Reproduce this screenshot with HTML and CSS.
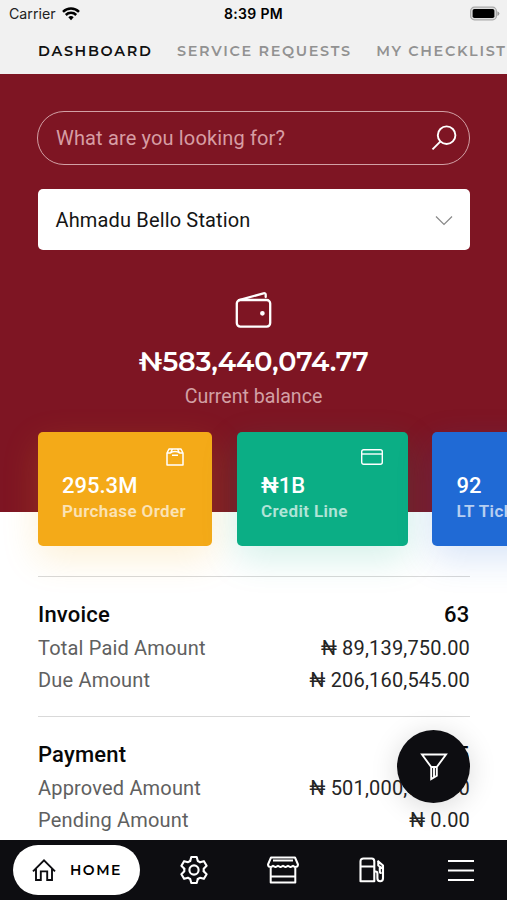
FILE: index.html
```html
<!DOCTYPE html>
<html lang="en">
<head>
<meta charset="utf-8">
<title>Dashboard</title>
<link rel="stylesheet" href="styles.css">
</head>
<body>
<div class="app">
  <header class="top">
    <div class="status">
      <div class="carrier"><span>Carrier</span>
        <svg width="18" height="14" viewBox="0 0 18 14"><path d="M9 13.2 6.3 10.3a3.9 3.9 0 0 1 5.4 0Z" fill="#000"/><path d="M3.8 8a7.4 7.4 0 0 1 10.4 0M1 4.8a11.5 11.5 0 0 1 16 0" fill="none" stroke="#000" stroke-width="2.5"/></svg>
      </div>
      <div class="time">8:39 PM</div>
      <svg class="battery" width="32" height="16" viewBox="0 0 32 16"><rect x="2.6" y="1.2" width="25.8" height="12.6" rx="3.8" fill="#ddd" stroke="#aaa" stroke-width="1.2"/><rect x="4.6" y="3" width="21.8" height="9" rx="1.8" fill="#000"/><path d="M29.4 5.2q2 .8 2 2.4t-2 2.4Z" fill="#999"/></svg>
    </div>
    <nav class="tabs">
      <span class="tab tab-on">DASHBOARD</span>
      <span class="tab">SERVICE REQUESTS</span>
      <span class="tab">MY CHECKLIST</span>
    </nav>
  </header>

  <main class="content">
    <section class="hero">
      <div class="search"><span>What are you looking for?</span>
        <svg width="26" height="26" viewBox="0 0 26 26" fill="none" stroke="#fff" stroke-width="1.9"><circle cx="15.6" cy="10.2" r="8.8"/><path d="M9.5 16.4 1.5 24.4"/></svg>
      </div>
      <div class="select"><span>Ahmadu Bello Station</span>
        <svg width="18" height="12" viewBox="0 0 18 12" fill="none" stroke="#888" stroke-width="1.2"><path d="M1 2.5 9 10.5 17 2.5"/></svg>
      </div>
      <svg class="wallet" width="38" height="38" viewBox="0 0 38 38" fill="none" stroke="#fff" stroke-width="2.3" stroke-linejoin="round" stroke-linecap="round"><rect x="1.8" y="9" width="33.4" height="26.6" rx="3.5"/><path d="M4 9.2 28.5 2.3q2-.5 2.2 1.4V6"/><circle cx="27.4" cy="22.3" r="1.2" fill="#fff"/></svg>
      <div class="balance">₦583,440,074.77</div>
      <div class="caption">Current balance</div>
    </section>

    <section class="cards">
      <article class="card orange">
        <svg width="18" height="18" viewBox="0 0 18 18" fill="none" stroke="#fff" stroke-width="1.5" stroke-linejoin="round"><path d="M1 5 3 1h12l2 4v12H1ZM1 5h3.5L6.5 1M17 5h-3.5l-2-4M4.5 5Q6 3.4 9 3.4T13.5 5M6 7.3h6"/></svg>
        <strong>295.3M</strong><span>Purchase Order</span>
      </article>
      <article class="card green">
        <svg class="credit" width="22" height="16" viewBox="0 0 22 16" fill="none" stroke="#fff" stroke-width="1.4"><rect x=".7" y=".7" width="20.6" height="14.6" rx="2"/><path d="M1 5h20"/></svg>
        <strong>₦1B</strong><span>Credit Line</span>
      </article>
      <article class="card blue"><strong>92</strong><span>LT Tickets</span></article>
    </section>

    <section class="group">
      <div class="row title"><span>Invoice</span><span>63</span></div>
      <div class="row"><span>Total Paid Amount</span><b>₦ 89,139,750.00</b></div>
      <div class="row"><span>Due Amount</span><b>₦ 206,160,545.00</b></div>
    </section>
    <section class="group">
      <div class="row title"><span>Payment</span><span>15</span></div>
      <div class="row"><span>Approved Amount</span><b>₦ 501,000,000.00</b></div>
      <div class="row"><span>Pending Amount</span><b>₦ 0.00</b></div>
    </section>
  </main>

  <div class="fab">
    <svg width="28" height="30" viewBox="0 0 28 30" fill="none" stroke="#fff" stroke-width="1.9"><path d="M2 2.5h24L16.8 15v8.7L11.2 27V15ZM11 15h6M14 16v9"/></svg>
  </div>

  <footer class="bar">
    <div class="home">
      <svg width="24" height="24" viewBox="0 0 24 24" fill="none" stroke="#0d0d11" stroke-width="1.9"><path d="M1 13.4 12 2.4l11 11M4 11v11h4.8v-8.6h6.4V22H20V11"/></svg>
      <span>HOME</span>
    </div>
    <div class="item"><svg width="30" height="30" viewBox="-15 -15 30 30" fill="none" stroke="#fff" stroke-width="2.1" stroke-linejoin="round" stroke-linecap="round"><g id="tooth"><path d="M-3.8-9-2.7-13H2.7L3.8-9 5.9-7.8"/></g><use href="#tooth" transform="rotate(60)"/><use href="#tooth" transform="rotate(120)"/><use href="#tooth" transform="rotate(180)"/><use href="#tooth" transform="rotate(240)"/><use href="#tooth" transform="rotate(300)"/><circle r="4.6"/></svg></div>
    <div class="item"><svg width="32" height="28" viewBox="0 0 32 28" fill="none" stroke="#fff" stroke-width="2" stroke-linejoin="round"><path d="M4 1.5h24l3 7q0 2.6-3 2.6l-2-1.3-2.5 1.3L21 9.8l-2.5 1.3L16 9.8l-2.5 1.3L11 9.8l-2.5 1.3L6 9.8 4 11.1q-3 0-3-2.6ZM3.7 11v15.5h24.6V11M4 20.5h24M6 4.5h20"/></svg></div>
    <div class="item"><svg width="26" height="28" viewBox="0 0 26 28" fill="none" stroke="#fff" stroke-width="2.1" stroke-linejoin="round"><path d="M1.5 25.3V5.5q0-3 3-3h8.3q2.5 0 2.5 3v19.8ZM1.5 10.5h13.8M15.3 15.5h1.3q1.8 0 1.8 2v4.7q0 3 2.8 3t2.8-3V9.5l-5.5-4.8M19.3 5.3v4.2l4 2.8M20.8 11v4.5q0 1.5 1.8 1.5"/></svg></div>
    <div class="item"><svg width="28" height="24" viewBox="0 0 28 24" stroke="#fff" stroke-width="2.2"><path d="M1 3h26M1 12.5h26M1 22h26"/></svg></div>
  </footer>
</div>
</body>
</html>
```
FILE: styles.css
```css
* { box-sizing: border-box; }
body { margin: 0; font-family: Roboto, "Liberation Sans", sans-serif; }
svg { display: block; flex: none; }

.app {
  position: relative;
  display: flex;
  flex-direction: column;
  width: 507px;
  height: 900px;
  overflow: hidden;
  background: #fff;
}

.top { flex: none; height: 74px; background: #f1f1f1; }
.status {
  display: grid;
  grid-template-columns: 1fr auto 1fr;
  align-items: center;
  height: 27px;
  padding: 0 7px 0 9px;
  font: 14.2px Inter, sans-serif;
  color: #222;
}
.carrier { display: flex; align-items: center; gap: 6px; }
.time { margin-left: -2px; font-size: 14px; font-weight: 600; letter-spacing: .3px; color: #000; }
.battery { justify-self: end; }
.tabs {
  display: flex;
  gap: 24.5px;
  height: 47px;
  padding-left: 38px;
  line-height: 48px;
  white-space: nowrap;
}
.tab {
  font-family: Montserrat, Inter, sans-serif;
  font-size: 14.4px;
  font-weight: 600;
  letter-spacing: 1.68px;
  color: #929292;
}
.tab-on { color: #111; }

.content { flex: 1; min-height: 0; overflow: hidden; }
.hero {
  display: flex;
  flex-direction: column;
  align-items: center;
  height: 438px;
  padding: 37px 37px 0;
  background: #7e1523;
}
.search, .select {
  display: flex;
  align-items: center;
  justify-content: space-between;
  width: 433px;
  font-size: 20px;
  letter-spacing: .15px;
}
.search {
  height: 54px;
  padding: 0 12px 0 18px;
  border: 1.5px solid #d2a0a5;
  border-radius: 27px;
  color: #d79da3;
}
.select {
  width: 432px;
  height: 61px;
  margin-top: 24px;
  padding: 0 17px 0 18px;
  border-radius: 5px;
  background: #fff;
  color: #151515;
}
.wallet { margin-top: 41px; }
.balance {
  margin-top: 16px;
  font: 600 27px/34px Montserrat, Inter, sans-serif;
  letter-spacing: -.05px;
  color: #fff;
}
.caption { margin-top: 6px; font-size: 19.6px; line-height: 24px; color: #d2a0a5; }

.cards {
  display: flex;
  gap: 24.5px;
  margin-top: -80px;
  padding-left: 37.5px;
}
.card {
  position: relative;
  flex: none;
  display: flex;
  flex-direction: column;
  height: 114px;
  padding: 40px 24.5px 0;
  border-radius: 5px;
  color: #fff;
}
.card svg { position: absolute; top: 16px; right: 28px; }
.card .credit { top: 17px; right: 25px; }
.card strong { font-size: 22px; font-weight: 500; line-height: 27px; }
.card span { font-size: 17px; font-weight: 600; line-height: 25px; letter-spacing: .4px; opacity: .68; white-space: nowrap; }
.orange { width: 174.5px; background: #f4aa18; box-shadow: 0 12px 36px rgba(244, 170, 24, .18); }
.green { width: 171px; background: #0bae85; box-shadow: 0 12px 36px rgba(11, 174, 133, .18); }
.blue { width: 171px; background: #206ad5; box-shadow: 0 12px 36px rgba(32, 106, 213, .18); }

.group {
  height: 139.6px;
  margin: 0 37px 0 38px;
  padding-top: 22px;
  border-top: 1px solid #d9d9d9;
}
.cards + .group { margin-top: 30.4px; }
.row {
  display: flex;
  justify-content: space-between;
  font-size: 20px;
  line-height: 32px;
  letter-spacing: .18px;
  color: #606060;
}
.row b { font-weight: 400; color: #252525; }
.title { margin-bottom: 1px; padding-right: .6px; font-size: 22px; font-weight: 500; color: #080808; }

.fab {
  position: absolute;
  right: 37px;
  bottom: 97px;
  display: grid;
  place-items: center;
  width: 73px;
  height: 73px;
  border-radius: 50%;
  background: #0d0d11;
  box-shadow: 0 4px 28px rgba(0, 0, 0, .15);
}

.bar {
  flex: none;
  display: flex;
  align-items: center;
  height: 60px;
  padding-left: 13px;
  background: #0d0d11;
}
.home {
  display: flex;
  align-items: center;
  gap: 14px;
  width: 127px;
  height: 50px;
  margin-right: 9px;
  padding-left: 19px;
  border-radius: 25px;
  background: #fff;
  font: 600 14px Montserrat, Inter, sans-serif;
  letter-spacing: 1.5px;
}
.item { display: grid; place-items: center; width: 89px; }
```
